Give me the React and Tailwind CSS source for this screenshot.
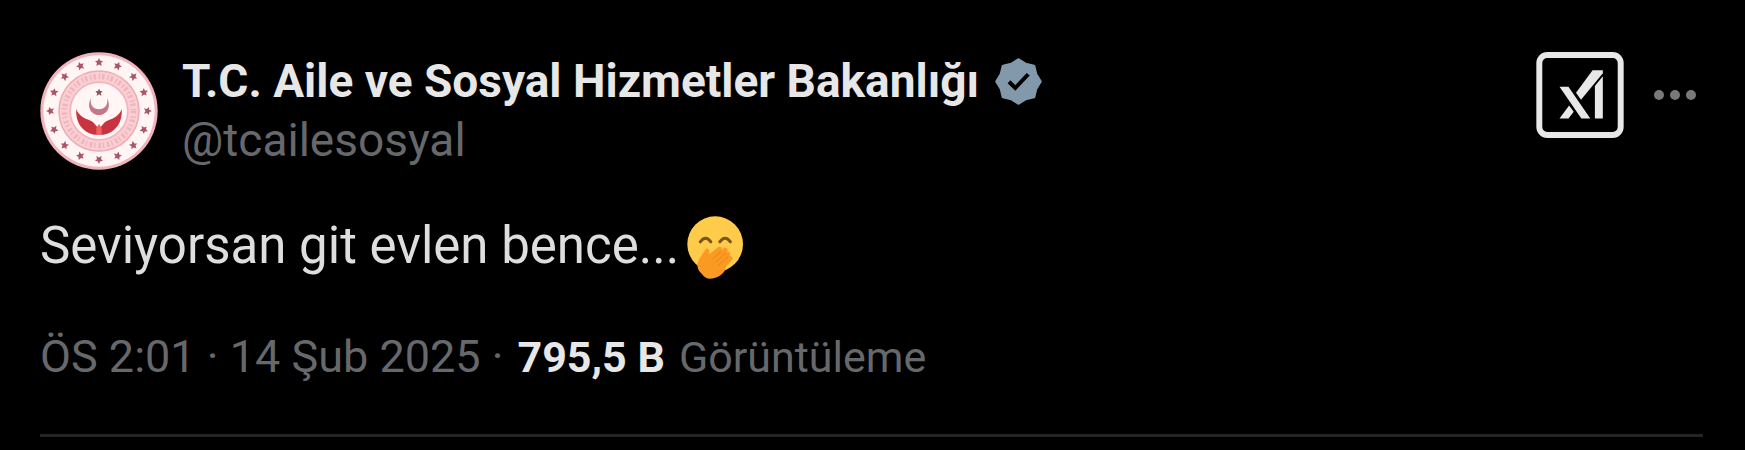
import React from "react";

const STARS = Array.from({ length: 16 }, (_, i) => {
  const a = (i * Math.PI) / 8;
  return { x: 207 + 145 * Math.sin(a), y: 211 - 145 * Math.cos(a), deg: i * 22.5 };
});

const STAR = "M0 -13 4 -5 12 -4 6 2 8 11 0 6 -8 11 -6 2 -12 -4 -4 -5Z";

const BADGE = Array.from({ length: 16 }, (_, i) => {
  const a = (i * Math.PI) / 8;
  const r = i % 2 ? 7.5 : 8.7;
  return `${(11 + r * Math.sin(a)).toFixed(2)},${(11 - r * Math.cos(a)).toFixed(2)}`;
}).join(" ");

function Avatar() {
  return (
    <svg viewBox="31 35 352 352" className="size-[118px] shrink-0" role="img" aria-label="Bakanlık logosu">
      <circle cx="207" cy="211" r="175" fill="#f3b3bc" />
      <circle cx="207" cy="211" r="166" fill="#fff5f4" />
      <circle cx="207" cy="211" r="122" fill="#f9cfd3" />
      <circle cx="207" cy="211" r="103" fill="none" stroke="#e59aa5" strokeWidth="16" strokeDasharray="7 9 4 6" opacity="0.5" />
      <circle cx="207" cy="211" r="119" fill="none" stroke="#f0a9b3" strokeWidth="4" />
      <circle cx="207" cy="211" r="86" fill="#fff6f5" stroke="#f3b4bb" strokeWidth="5" />
      {STARS.map((s) => (
        <path key={s.deg} d={STAR} fill="#a9566a" transform={`translate(${s.x} ${s.y}) rotate(${s.deg})`} />
      ))}
      <path d={STAR} fill="#8a5560" transform="translate(207 156) scale(0.9)" />
      <path d="M183 173c-14 25 0 50 24 50s38-25 24-50c4 20-7 33-24 33s-28-13-24-33Z" fill="#c5778a" />
      <path d="M139 205c-2 40 16 68 54 77h13v-24c-8 2-10-12-24-18-17-7-35-13-43-35Z" fill="#c93340" />
      <path d="M275 205c2 40-16 68-54 77h-13v-24c8 2 10-12 24-18 17-7 35-13 43-35Z" fill="#c93340" />
      <path d="M207 250l8 12v20h-16v-20Z" fill="#f0605c" />
    </svg>
  );
}

function Verified() {
  return (
    <svg viewBox="1.600 1.600 18.800 18.800" className="size-[47px] shrink-0" role="img" aria-label="Onaylı hesap">
      <polygon points={BADGE} fill="#8299ab" stroke="#8299ab" strokeWidth="1.200" strokeLinejoin="round" />
      <path d="M7.200 11.100l2.500 2.500 5.200-5.500" fill="none" stroke="#000" strokeWidth="1.600" />
    </svg>
  );
}

function Grok() {
  return (
    <svg viewBox="16 18 264 260" className="block h-[86px] w-[88px]" fill="#e8e8e8" aria-hidden="true">
      <rect x="25" y="27" width="246" height="242" rx="24" fill="none" stroke="#e8e8e8" strokeWidth="18" />
      <path d="M86 123h27l66 96h-27Z" />
      <path d="M86 219h27l16-20-14-19Z" />
      <path d="M186 73h31v9l-66 80-15-21Z" />
      <path d="M193 121l24-30v128h-24Z" />
    </svg>
  );
}

function Giggle() {
  return (
    <svg viewBox="52 46 172 190" className="h-[63px] w-[57px] shrink-0" role="img" aria-label="🤭">
      <circle cx="137" cy="131" r="84" fill="#fecb4b" />
      <g fill="none" stroke="#7a541c" strokeWidth="9" strokeLinecap="round">
        <path d="M92 124q16-22 32 0" />
        <path d="M151 124q16-22 32 0" />
      </g>
      <path
        fill="#fa9a22"
        d="M108 146c8-6 14 4 10 16l28-22c9-5 15 3 9 9l8-6c9-4 16 5 9 12 9-4 15 5 8 12 9-2 13 7 6 13l-16 18c-3 22-26 37-50 37-14 0-20-11-28-19-10-10-10-26-5-36 5-11 15-22 21-34Z"
      />
      <path d="M128 178l26-25M138 186l30-27M146 195l30-26" fill="none" stroke="#ee821c" strokeWidth="3" strokeLinecap="round" />
    </svg>
  );
}

export default function App() {
  return (
    <main className="min-h-screen bg-black pt-[52px] pr-[42px] pl-10 font-['Roboto','Liberation_Sans',sans-serif] text-[#e7e7e7]">
      <article>
        <header className="flex items-start justify-between">
          <div className="flex items-center gap-6">
            <Avatar />
            <div className="text-[46px] leading-[59px]">
              <div className="flex items-center gap-4">
                <h1 className="font-bold">T.C. Aile ve Sosyal Hizmetler Bakanlığı</h1>
                <Verified />
              </div>
              <a href="#tcailesosyal" className="block text-[#66686b]">@tcailesosyal</a>
            </div>
          </div>
          <div className="flex items-center gap-7">
            <button type="button" aria-label="Grok">
              <Grok />
            </button>
            <button type="button" aria-label="Daha fazla">
              <svg viewBox="0 0 51 12" className="block h-3 w-[51px]" fill="#77797b" aria-hidden="true">
                <circle cx="7" cy="6" r="5" />
                <circle cx="23" cy="6" r="5" />
                <circle cx="39" cy="6" r="5" />
              </svg>
            </button>
          </div>
        </header>
        <p className="mt-[46px] flex items-start gap-2 text-[51px] leading-[60px] text-[#dedede]">
          <span>Seviyorsan git evlen bence...</span>
          <Giggle />
        </p>
        <div className="mt-12 flex items-baseline gap-[14px] border-b-3 border-[#242527] pb-[47px] text-[43px] leading-[60px] text-[#66686b]">
          <time dateTime="2025-02-14T14:01" className="text-[45px]">ÖS 2:01 · 14 Şub 2025 ·</time>
          <span className="font-bold text-[#e7e7e7]">795,5 B</span>
          <span>Görüntüleme</span>
        </div>
      </article>
    </main>
  );
}
